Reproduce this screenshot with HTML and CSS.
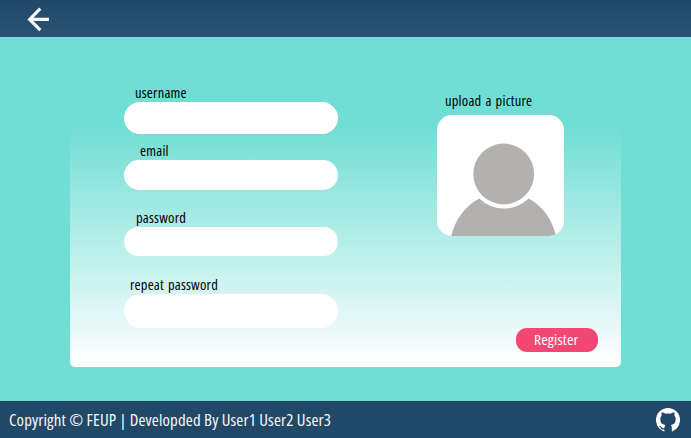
FILE: index.html
```
<!DOCTYPE html>
<html lang="en">
<head>
<meta charset="utf-8">
<title>Register</title>
<link rel="stylesheet" href="styles.css">
</head>
<body>
<header class="topbar">
  <a class="back" href="#" aria-label="Back">
    <svg width="24" height="26" viewBox="0 0 24 26"><path d="M14.300 2.600 3.600 13.400l10.700 10.800M4 13.400H23" fill="none" stroke="#f7f8fa" stroke-width="3.100"/></svg>
  </a>
</header>
<main>
  <form class="card">
    <div class="fields">
      <div class="field username"><label for="u"><span class="wide">username</span></label><input id="u" type="text"></div>
      <div class="field email"><label for="e"><span class="wide">email</span></label><input id="e" type="email"></div>
      <div class="field password"><label for="p"><span class="wide">password</span></label><input id="p" type="password"></div>
      <div class="field repeat"><label for="r"><span class="wide">repeat password</span></label><input id="r" type="password"></div>
    </div>
    <div class="side">
      <label class="upload"><span class="wide">upload a picture</span></label>
      <div class="avatar">
        <svg width="127" height="121" viewBox="0 0 127 121"><g fill="#b2b1af"><circle cx="66.700" cy="59" r="30.400"/><path d="M14.200 121C18 105 28 91 42.300 83.500A35 35 0 0 0 91.500 83.500C106 91 115.500 105 119 121Z"/></g></svg>
      </div>
      <button class="register" type="button"><span class="wide">Register</span></button>
    </div>
  </form>
</main>
<footer class="footer">
  <span class="wide copyright">Copyright © FEUP | Developded By User1 User2 User3</span>
  <a class="github" href="#" aria-label="GitHub"><svg width="24" height="24" viewBox="0 0 24 24"><circle cx="12" cy="12" r="12" fill="#fff"/><path fill="#224868" d="M5.700 4.600C7 4.400 8.300 5 9.300 5.700Q12 5.100 14.700 5.700C15.700 5 17 4.400 18.300 4.600Q18.800 6 18.400 7.600C20 9.400 20 12 19.200 14C18.500 15.800 17 16.600 15 17Q15.800 18 15.800 19.500V24H8.400V21.500C5.500 22 4.800 20.500 4.200 19.200L3 18C5 17.400 5.500 19.500 6.600 20Q7.700 20.400 8.500 19.800Q8.500 18 9.200 17C7 16.600 5.500 15.800 4.800 14C4 12 4 9.400 5.600 7.600Q5.200 6 5.700 4.600Z"/></svg></a>
</footer>
</body>
</html>
```
FILE: styles.css
```
* { box-sizing: border-box; }
body {
  margin: 0;
  height: 438px;
  display: flex;
  flex-direction: column;
  overflow: hidden;
  background: #70ded4;
  color: #000;
  font: 500 13.5px/17px "Open Sans", sans-serif;
  font-stretch: 75%;
  letter-spacing: .2px;
  word-spacing: 1px;
}
.topbar {
  height: 37px;
  flex: none;
  padding: 6px 0 0 26px;
  background: linear-gradient(#214868, #2d5373);
}
.back svg, .github svg, .avatar svg { display: block; }
main { flex: 1; padding: 0 70px; }
.card {
  height: 330px;
  display: flex;
  padding: 48px 23px 0 54px;
  border-radius: 0 0 5px 5px;
  background: linear-gradient(#70ded4 90px, #fff 328px);
}
.wide {
  display: inline-block;
  white-space: nowrap;
  transform: scaleX(1.075);
  transform-origin: 0 50%;
}
.fields { width: 214px; }
.field label { display: block; height: 17px; }
.field input {
  display: block;
  width: 214px;
  border: 0;
  outline: 0;
  background: #fff;
}
.username label { padding-left: 11px; }
.username input { height: 32px; border-radius: 16px; }
.email { margin-top: 9px; }
.email label { padding-left: 16px; }
.email input { height: 30px; border-radius: 15px; }
.password { margin-top: 20px; }
.password label { padding-left: 12px; }
.password input { height: 29px; border-radius: 15px; }
.repeat { margin-top: 21px; }
.repeat label { padding-left: 6px; }
.repeat input { height: 34px; border-radius: 17px; }
.side {
  margin-left: auto;
  width: 161px;
  display: flex;
  flex-direction: column;
  padding-top: 8px;
}
.upload { height: 22px; padding-left: 8px; }
.avatar {
  width: 127px;
  height: 121px;
  border-radius: 15px;
  overflow: hidden;
  background: #fff;
}
.register {
  align-self: flex-end;
  width: 82px;
  height: 24px;
  margin-top: 92px;
  padding: 0 0 1px 18px;
  border: 0;
  border-radius: 11px;
  background: #f34773;
  color: #fff;
  font: inherit;
  font-weight: 400;
  font-size: 14.5px;
  letter-spacing: .15px;
  text-align: left;
}
.footer {
  height: 37px;
  flex: none;
  display: flex;
  align-items: center;
  justify-content: space-between;
  padding: 1px 11px 0 9px;
  background: #224868;
  color: #f4f7f9;
  font-size: 16px;
  font-weight: 400;
  line-height: 22px;
  letter-spacing: .14px;
  word-spacing: 0;
}
.copyright { transform: scaleX(1.052); }
```
